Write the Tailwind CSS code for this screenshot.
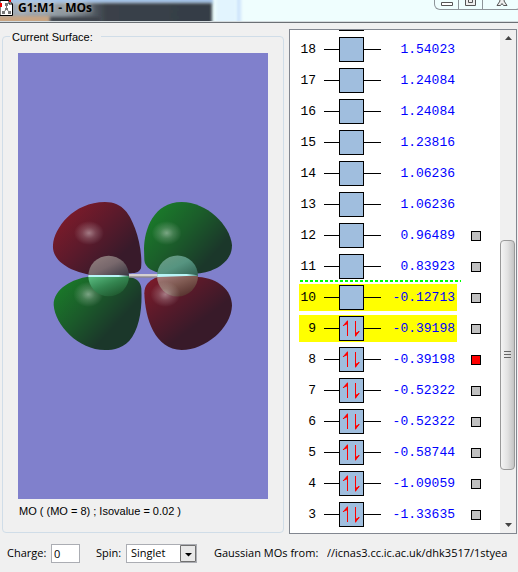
<!DOCTYPE html>
<html lang="en">
<head>
  <meta charset="UTF-8" />
  <meta name="viewport" content="width=device-width, initial-scale=1.0" />
  <title>G1:M1 - MOs</title>
  <script src="https://cdn.jsdelivr.net/npm/@tailwindcss/browser@4"></script>
</head>
<body class="h-screen flex flex-col overflow-hidden bg-[#f0f0f0] text-black text-[11px] leading-4 font-['Open_Sans',sans-serif]">

  <!-- Title bar -->
  <header class="relative flex shrink-0 h-[23px] overflow-hidden border-b border-[#6b7075] bg-[#effefe]">
    <!-- Desktop showing through the glass frame -->
    <svg class="absolute inset-0 h-full w-full" preserveAspectRatio="none" viewBox="0 0 518 22" aria-hidden="true">
      <defs>
        <filter id="soft" filterUnits="userSpaceOnUse" x="-20" y="-20" width="560" height="70"><feGaussianBlur stdDeviation="1.500" /></filter>
        <linearGradient id="glass" gradientUnits="userSpaceOnUse" x1="0" x2="212" y1="0" y2="0">
          <stop stop-color="#a3aeb8" />
          <stop offset=".3" stop-color="#8f979e" />
          <stop offset=".5" stop-color="#3a4149" />
          <stop offset="1" stop-color="#343d46" />
        </linearGradient>
      </defs>
      <rect x="-10" y="-10" width="223" height="14" fill="#a7c5e8" filter="url(#soft)" />
      <rect x="-10" y="3" width="222" height="31" fill="url(#glass)" filter="url(#soft)" />
      <rect x="-10" y="16" width="60" height="14" fill="#c8a583" filter="url(#soft)" />
      <rect x="50" y="17" width="50" height="5" fill="#3c434b" filter="url(#soft)" />
      <rect x="236" y="-10" width="5" height="50" fill="#cfe4fb" filter="url(#soft)" />
      <rect x="216" y="-10" width="20" height="50" fill="#e2f4fe" filter="url(#soft)" />
      <rect y="21" width="518" height="1" fill="#d5dcdf" />
    </svg>
    <div class="relative flex items-start">
      <svg class="h-4 w-[13px]" viewBox="0 0 13 16" aria-hidden="true">
        <path d="M0 .5H9L12.500 4V15.500H0Z" fill="#fff" stroke="#000" />
        <path d="M9 .5V4H12.500" fill="none" stroke="#000" />
        <path d="M0 3H2V7H0ZM9 0H11V2H9Z" fill="#e00" />
        <path d="M6.500 5V9L3 13M6.500 9L10 13" fill="none" stroke="#777" />
        <path d="M5 3H8V6H5ZM5 8H8V10H5ZM2 11H5V14H2ZM8 11H11V14H8Z" fill="#777" />
      </svg>
      <h1 class="pl-[5px] text-[12px] leading-4 font-bold [text-shadow:0_0_5px_#ffffffa0]">G1:M1 - MOs</h1>
    </div>
    <div class="relative ml-auto -mr-1 flex h-[10px] overflow-hidden rounded-b-md border border-t-0 border-[#8d9499]">
      <button class="grid h-[9px] w-6 place-items-center border-r border-[#8d9499]" aria-label="Minimize">
        <svg class="h-[9px] w-3" viewBox="0 0 12 9"><path d="M.5 2.500H11.500V5.500H.5Z" fill="#fff" stroke="#555" /></svg>
      </button>
      <button class="grid h-[9px] w-6 place-items-center border-r border-[#8d9499]" aria-label="Maximize">
        <svg class="h-[9px] w-3" viewBox="0 0 12 9"><path d="M.5 -3V5.500H10.500V-3M3.500 -1V2.500H7.500V-1" fill="#eee" stroke="#555" /></svg>
      </button>
      <button class="grid h-[9px] w-[38px] place-items-center" aria-label="Close">
        <svg class="h-[9px] w-3" viewBox="0 0 12 9"><path d="M3.500 -1L4 1L1 5.500H4.500L6 3.500L7.500 5.500H11L8 1L8.500 -1" fill="#eee" stroke="#555" /></svg>
      </button>
    </div>
  </header>

  <main class="flex min-h-0 flex-1 gap-[5px] pt-[6px] pr-px pl-[2px]">

    <!-- Surface view -->
    <fieldset class="relative mt-[7px] mb-px flex min-w-0 flex-1 flex-col rounded-sm border border-[#d0dde8] px-[15px] pt-4 pb-[13px]">
      <h2 class="absolute -top-[8px] left-[7px] bg-[#f0f0f0] pr-2 pl-[2px] font-['Liberation_Sans',sans-serif]">Current Surface:</h2>
      <svg class="min-h-0 w-full flex-1 bg-[#8080cc]" viewBox="18 53 250 446" role="img" aria-label="Molecular orbital surface">
        <defs>
          <linearGradient id="redTop" x1=".2" y1=".1" x2=".85" y2=".65"><stop stop-color="#7b1b2a" /><stop offset=".5" stop-color="#5b1a2b" /><stop offset="1" stop-color="#381a2a" /></linearGradient>
          <linearGradient id="greenTop" x1=".1" y1=".1" x2=".85" y2=".65"><stop stop-color="#1a7c2a" /><stop offset=".5" stop-color="#1b5d2a" /><stop offset="1" stop-color="#1b372a" /></linearGradient>
          <linearGradient id="greenLow" x1=".1" y1=".1" x2=".75" y2=".6"><stop stop-color="#1a7829" /><stop offset=".5" stop-color="#1b5a2a" /><stop offset="1" stop-color="#1b372a" /></linearGradient>
          <linearGradient id="redLow" x1=".1" y1="0" x2=".65" y2=".6"><stop stop-color="#7a1b2a" /><stop offset=".5" stop-color="#591a2a" /><stop offset="1" stop-color="#381a29" /></linearGradient>
          <radialGradient id="shine"><stop stop-color="#fff" stop-opacity=".42" /><stop offset=".45" stop-color="#fff" stop-opacity=".18" /><stop offset="1" stop-color="#fff" stop-opacity="0" /></radialGradient>
          <linearGradient id="atomLeft" x2="1" y2="1"><stop stop-color="#94807f" /><stop offset=".5" stop-color="#78686c" /><stop offset="1" stop-color="#383540" /></linearGradient>
          <linearGradient id="atomLeftLow" x2=".8" y2="1"><stop stop-color="#5cc084" /><stop offset=".5" stop-color="#348550" /><stop offset="1" stop-color="#1c522a" /></linearGradient>
          <linearGradient id="atomRight" x2="1" y2="1"><stop stop-color="#6d9c83" /><stop offset=".5" stop-color="#569480" /><stop offset="1" stop-color="#2f5f50" /></linearGradient>
          <linearGradient id="atomRightLow" x2=".8" y2="1"><stop stop-color="#a8807f" /><stop offset=".5" stop-color="#7d5850" /><stop offset="1" stop-color="#502c29" /></linearGradient>
        </defs>
        <g transform="translate(40 190) scale(.33333)">
          <path d="M39 165C42 115 100 36 195 36C250 36 270 75 285 115C300 155 307 205 303 235C297 249 283 250 265 250L150 254C95 245 35 215 39 165Z" fill="url(#redTop)" />
          <path d="M312 175C313 120 340 36 425 36C500 36 570 105 576 165C577 220 515 250 465 251L365 250C340 245 315 235 313 210Z" fill="url(#greenTop)" />
          <path d="M41 345C40 295 100 266 145 260L270 262C290 266 302 275 304 295C307 350 300 405 277 440C255 475 220 480 195 480C115 480 45 405 41 345Z" fill="url(#greenLow)" />
          <path d="M313 310C313 285 325 275 350 261L475 261C535 265 575 300 576 347C573 415 495 480 425 480C345 480 315 385 313 310Z" fill="url(#redLow)" />
          <ellipse cx="147" cy="129" rx="45" ry="36" fill="url(#shine)" />
          <ellipse cx="380" cy="129" rx="45" ry="36" fill="url(#shine)" />
          <ellipse cx="145" cy="313" rx="45" ry="38" fill="url(#shine)" />
          <path d="M145 258A61 61 0 0 1 267 258Z" fill="url(#atomLeft)" />
          <path d="M145 258A61 61 0 0 0 267 258Z" fill="url(#atomLeftLow)" />
          <path d="M351 258A61 61 0 0 1 474 258Z" fill="url(#atomRight)" />
          <path d="M351 258A61 61 0 0 0 474 258Z" fill="url(#atomRightLow)" />
          <ellipse cx="376" cy="313" rx="45" ry="38" fill="url(#shine)" />
          <path d="M267 252H352V261H267Z" fill="#d5d0d1" />
          <path d="M267 259H352V263H267Z" fill="#8b8588" />
          <path d="M145 255H235L267 258L235 261H145ZM352 252H440L474 256L440 258L352 261Z" fill="#b8f5f7" />
        </g>
      </svg>
      <p class="pt-1 pl-px font-['Liberation_Sans',sans-serif]">MO ( (MO = 8) ; Isovalue = 0.02 )</p>
    </fieldset>

    <!-- Orbital list -->
    <section class="flex w-[228px] shrink-0 overflow-hidden border border-[#828790] bg-white" aria-label="Molecular orbitals">
      <ol id="orbitals" class="flex min-h-0 flex-1 flex-col justify-end pb-[3px] pl-[9px] font-['Liberation_Mono',monospace] text-[13px]"></ol>
      <div class="flex w-4 flex-col bg-[#f0f0f0]">
        <button class="grid h-4 place-items-center" aria-label="Scroll up"><svg class="h-1 w-[7px]" viewBox="0 0 7 4"><path d="M0 4L3.500 0L7 4Z" fill="#444" /></svg></button>
        <div class="flex-[195]"></div>
        <div class="mr-px grid flex-[229] place-items-center rounded-sm border border-[#999] bg-linear-to-r from-[#f4f4f4] via-[#e2e2e2] to-[#c4c4c4]">
          <svg class="h-2 w-[7px]" viewBox="0 0 7 8"><path d="M0 .5H7M0 3.500H7M0 6.500H7" stroke="#666" /></svg>
        </div>
        <div class="flex-[47]"></div>
        <button class="grid h-4 place-items-center" aria-label="Scroll down"><svg class="h-1 w-[7px]" viewBox="0 0 7 4"><path d="M0 0H7L3.500 4Z" fill="#444" /></svg></button>
      </div>
    </section>
  </main>

  <!-- Charge / spin -->
  <footer class="flex h-[38px] shrink-0 items-center overflow-hidden pr-[7px] pl-[7px] whitespace-nowrap">
    <label for="charge" class="w-11">Charge:</label>
    <input id="charge" value="0" class="h-[19px] w-[29px] border border-[#abadb3] bg-white px-[2px]" />
    <label for="spin" class="ml-4 w-[30px]">Spin:</label>
    <div class="relative h-[19px] w-[71px] shrink-0">
      <select id="spin" class="h-[19px] w-full appearance-none border border-[#abadb3] bg-white pl-1 leading-4">
        <option>Singlet</option>
        <option>Triplet</option>
      </select>
      <svg class="pointer-events-none absolute top-px right-px h-[17px] w-4" viewBox="0 0 16 17"><path d="M.5 .5H15.500V16.500H.5Z" fill="#e8e8e8" stroke="#707070" /><path d="M5 8H12L8.500 11.500Z" /></svg>
    </div>
    <p class="ml-[17px] w-[113px] shrink-0">Gaussian MOs from:</p>
    <p class="min-w-0 flex-1 overflow-hidden">//icnas3.cc.ic.ac.uk/dhk3517/1styea</p>
  </footer>

  <script>
    const energies = {
      18: "1.54023", 17: "1.24084", 16: "1.24084", 15: "1.23816", 14: "1.06236",
      13: "1.06236", 12: "0.96489", 11: "0.83923", 10: "-0.12713", 9: "-0.39198",
      8: "-0.39198", 7: "-0.52322", 6: "-0.52322", 5: "-0.58744", 4: "-1.09059", 3: "-1.33635",
    };

    const electrons = `<path d="M8.500 20V6M8.500 5L4 10M16.500 5V20M16.500 20L20 15" fill="none" stroke="#f00" />
      <path d="M9 4V8L4 10ZM16 21V17L21 15Z" fill="#f00" />`;

    const rows = Object.keys(energies).map(Number).sort((a, b) => b - a).map((n) => `
      <li class="relative flex h-[31px] shrink-0 items-center">
        ${n === 10 ? '<span class="absolute -top-[2px] left-px h-[2px] w-[161px] bg-[repeating-linear-gradient(90deg,#00ff00_0_3px,transparent_3px_5px)]"></span>' : ""}
        <div class="flex h-[27px] w-[158px] items-center ${n === 9 || n === 10 ? "bg-[#ffff00]" : ""}">
          <span class="w-[17px] text-right">${n}</span>
          <svg class="ml-2 h-[25px] w-[58px] shrink-0" viewBox="0 0 58 25">
            <path d="M0 12.500H57" stroke="#000" />
            <rect x="15.500" y=".5" width="24" height="24" fill="#a0bede" stroke="#000" />
            ${n < 10 ? `<g transform="translate(15)">${electrons}</g>` : ""}
          </svg>
          <span class="flex-1 pr-[2px] text-right text-[#0000ff]">${energies[n]}</span>
        </div>
        ${n < 13 ? `<button class="ml-[14px] size-[10px] border border-black ${n === 8 ? "bg-[#ff0000]" : "bg-[#c0c0c0]"}" aria-label="Show orbital ${n}"></button>` : ""}
      </li>`);

    // Bottom edge of the next orbital, scrolled just out of view
    rows.unshift('<li class="mb-[3px] ml-10 h-px w-[25px] shrink-0 bg-black"></li>');

    document.getElementById("orbitals").innerHTML = rows.join("");
  </script>
</body>
</html>
